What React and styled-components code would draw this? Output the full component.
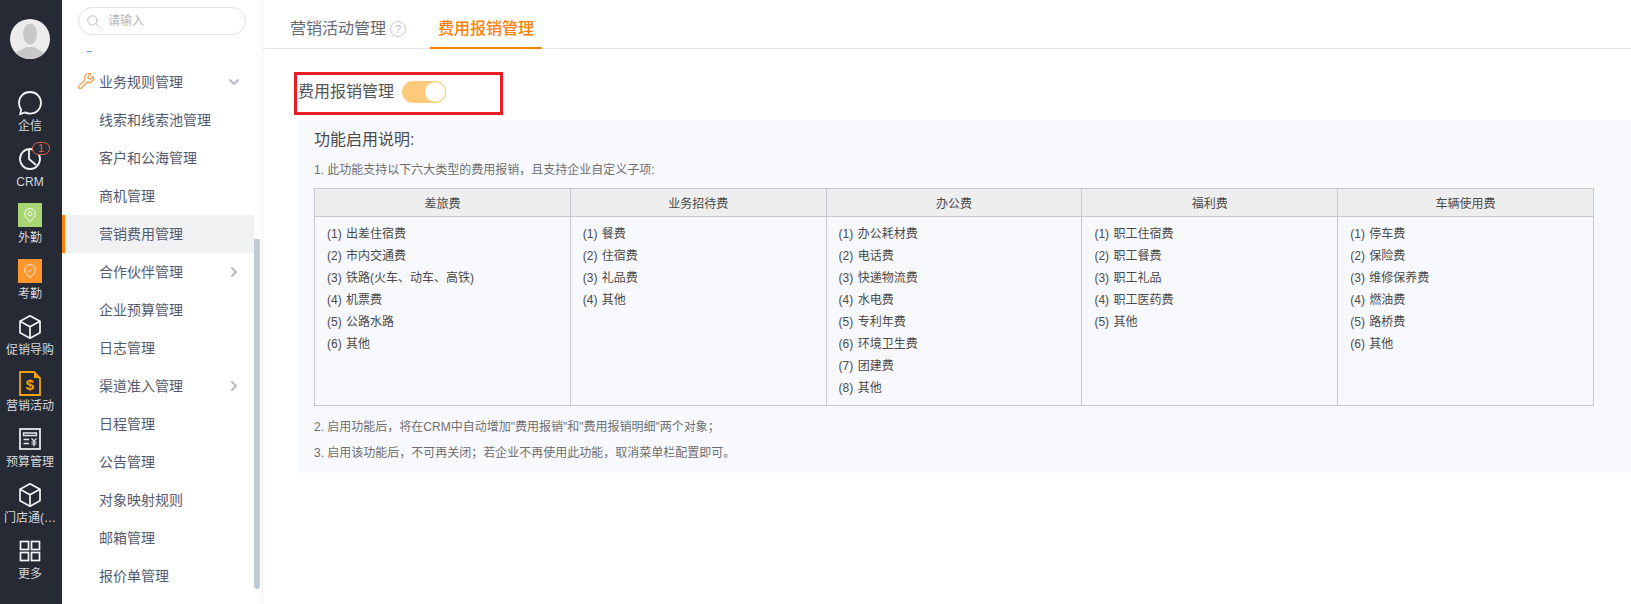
import styled, { createGlobalStyle } from "styled-components";
import { ChevronDown, ChevronRight, Search, Wrench } from "lucide-react";

const GlobalStyle = createGlobalStyle`
  html, body {
    margin: 0;
    padding: 0;
    background: #fff;
    font-family: "Liberation Sans", "Noto Sans CJK SC", sans-serif;
  }
`;

const Shell = styled.div`
  height: 100vh;
  display: flex;
  overflow: hidden;
  background: #fff;
`;

const Rail = styled.nav`
  width: 62px;
  flex: none;
  background: #252a35;
  display: flex;
  flex-direction: column;
  align-items: flex-start;
  padding: 19px 0 0 10px;
  box-sizing: border-box;
`;

const Avatar = styled.div`
  width: 40px;
  height: 40px;
  border-radius: 50%;
  overflow: hidden;
  margin-bottom: 31px;
  background: #ececec;

  svg {
    display: block;
  }
`;

const RailItem = styled.div`
  width: 60px;
  height: 56px;
  margin-left: -10px;
  flex: none;
  display: flex;
  flex-direction: column;
  align-items: center;
`;

const IconBox = styled.div`
  height: 26px;
  width: 60px;
  position: relative;
  display: flex;
  align-items: center;
  justify-content: center;
`;

const Tile = styled.div`
  width: 24px;
  height: 24px;
  background: ${({ $color }) => $color};
  display: flex;
  align-items: center;
  justify-content: center;
`;

const Badge = styled.span`
  position: absolute;
  left: 32px;
  top: -4px;
  width: 16px;
  height: 11px;
  border: 1px solid #ea6044;
  border-radius: 7px;
  background: #252a35;
  color: #ea6044;
  font-size: 11px;
  line-height: 11px;
  text-align: center;
`;

const RailLabel = styled.span`
  font-size: 12px;
  line-height: 20px;
  color: #d6d8dd;
  white-space: nowrap;
`;

const Sidebar = styled.aside`
  width: 201px;
  flex: none;
  box-sizing: border-box;
  border-right: 1px solid #f0f0f4;
  display: flex;
  flex-direction: column;
  overflow: hidden;
`;

const SearchWrap = styled.div`
  height: 48px;
  flex: none;
  box-sizing: border-box;
  padding: 7px 0 0 16px;
`;

const SearchBox = styled.div`
  width: 168px;
  height: 28px;
  box-sizing: border-box;
  border: 1px solid #dfe1ea;
  border-radius: 14px;
  display: flex;
  align-items: center;
  padding-left: 7px;
  gap: 8px;
  color: #b4b6bd;
  font-size: 12px;
  line-height: 16px;

  span {
    margin-top: -1px;
  }
`;

const MenuArea = styled.div`
  flex: 1;
  display: flex;
  min-height: 0;
`;

const MenuList = styled.ul`
  width: 192px;
  flex: none;
  list-style: none;
  margin: 0;
  padding: 0;
`;

const ClippedRow = styled.li`
  height: 15px;
  box-sizing: border-box;
  padding: 3px 0 0 25px;

  &::before {
    content: "";
    display: block;
    width: 5px;
    height: 1px;
    background: #4aa8f0;
  }
`;

const MenuRow = styled.li`
  height: 38px;
  box-sizing: border-box;
  display: flex;
  align-items: center;
  padding-left: ${({ $active, $group }) => ($group ? 15 : $active ? 34 : 37)}px;
  padding-right: 12px;
  padding-bottom: 3px;
  border-left: ${({ $active }) => ($active ? "3px solid #ff8000" : "none")};
  background: ${({ $active }) => ($active ? "#f0f1f3" : "transparent")};
  color: #545a6e;
  font-size: 14px;
  white-space: nowrap;

  .lead {
    color: #f5903a;
    margin-right: 4px;
    margin-top: 1px;
    flex: none;
  }

  .trail {
    color: #b6bac5;
    margin-left: auto;
    margin-top: 2px;
    flex: none;
  }
`;

const ScrollThumb = styled.div`
  width: 6px;
  height: 350px;
  margin-top: 191px;
  background: #c3cad5;
  border-radius: 0 0 3px 3px;
  flex: none;
`;

const Main = styled.main`
  flex: 1;
  min-width: 0;
  display: flex;
  flex-direction: column;
`;

const TabBar = styled.div`
  height: 49px;
  flex: none;
  box-sizing: border-box;
  border-bottom: 1px solid #e4e6ef;
  display: flex;
  gap: 16px;
  padding-left: 19px;
`;

const Tab = styled.div`
  height: 49px;
  box-sizing: border-box;
  padding: 17px 8px 0;
  display: flex;
  align-items: flex-start;
  gap: 4px;
  font-size: 16px;
  line-height: 24px;
  color: ${({ $active }) => ($active ? "#ff8000" : "#666a72")};
  font-weight: ${({ $active }) => ($active ? 500 : 400)};
  border-bottom: ${({ $active }) =>
    $active ? "2px solid #ff8000" : "2px solid transparent"};
`;

const Help = styled.span`
  width: 14px;
  height: 14px;
  margin-top: 4px;
  border: 1px solid #c8cacf;
  border-radius: 50%;
  color: #b8bbc1;
  font-size: 11px;
  line-height: 14px;
  text-align: center;
`;

const Content = styled.div`
  padding: 23px 0 0 31px;
`;

const Highlight = styled.div`
  width: 209px;
  height: 43px;
  box-sizing: border-box;
  border: 3px solid #ec1c24;
  display: flex;
  align-items: center;
  padding: 0 0 3px 1px;
  gap: 8px;
  font-size: 16px;
  line-height: 24px;
  color: #555;
`;

const Toggle = styled.span`
  width: 44px;
  height: 22px;
  border-radius: 11px;
  background: #fdc97a;
  display: flex;
  justify-content: flex-end;
  align-items: center;
  padding-right: 1px;
  box-sizing: border-box;

  &::after {
    content: "";
    width: 20px;
    height: 20px;
    border-radius: 50%;
    background: #fff;
  }
`;

const Panel = styled.section`
  margin: 5px 0 0 4px;
  height: 353px;
  box-sizing: border-box;
  padding: 8px 0 0 16px;
  background: #f8f9fd;
  color: #666;
  font-size: 12px;
`;

const Heading = styled.h3`
  margin: 0 0 9px;
  font-size: 16px;
  font-weight: 400;
  line-height: 24px;
  color: #4a4a4a;
`;

const Note = styled.p`
  margin: 0;
  line-height: 18px;
  color: #6f6f6f;

  & + & {
    margin-top: 8px;
  }
`;

const Table = styled.table`
  width: 1280px;
  height: 218px;
  margin: 9px 0 12px;
  border-collapse: collapse;
  table-layout: fixed;
  font-size: 12px;
  color: #4a4a4a;

  th,
  td {
    border: 1px solid #c5c8d2;
  }

  th {
    height: 27px;
    padding: 0;
    background: #eeeeee;
    font-weight: 400;
  }

  td {
    vertical-align: top;
    padding: 6px 12px 4px;
  }
`;

const Entry = styled.div`
  line-height: 22px;
  white-space: nowrap;
  word-spacing: 1px;
`;

const menu = [
  { label: "线索和线索池管理" },
  { label: "客户和公海管理" },
  { label: "商机管理" },
  { label: "营销费用管理", active: true },
  { label: "合作伙伴管理", more: true },
  { label: "企业预算管理" },
  { label: "日志管理" },
  { label: "渠道准入管理", more: true },
  { label: "日程管理" },
  { label: "公告管理" },
  { label: "对象映射规则" },
  { label: "邮箱管理" },
  { label: "报价单管理" },
];

const columns = [
  {
    title: "差旅费",
    items: ["出差住宿费", "市内交通费", "铁路(火车、动车、高铁)", "机票费", "公路水路", "其他"],
  },
  { title: "业务招待费", items: ["餐费", "住宿费", "礼品费", "其他"] },
  {
    title: "办公费",
    items: ["办公耗材费", "电话费", "快递物流费", "水电费", "专利年费", "环境卫生费", "团建费", "其他"],
  },
  { title: "福利费", items: ["职工住宿费", "职工餐费", "职工礼品", "职工医药费", "其他"] },
  {
    title: "车辆使用费",
    items: ["停车费", "保险费", "维修保养费", "燃油费", "路桥费", "其他"],
  },
];

const BubbleIcon = () => (
  <svg width="26" height="26" viewBox="0 0 26 26" fill="none" stroke="#f2f3f5" strokeWidth="1.8">
    <path d="M13 2c6.200 0 11 4.600 11 10.800S19.200 23.600 13 23.600c-1.900 0-3.700-.4-5.200-1.200L3.200 24l1-4.300C2.800 17.900 2 15.500 2 12.800 2 6.600 6.800 2 13 2z" />
  </svg>
);

const PieIcon = () => (
  <svg width="24" height="24" viewBox="0 0 24 24" fill="none" stroke="#f2f3f5" strokeWidth="1.8">
    <circle cx="12" cy="12" r="10" />
    <path d="M11 2.500V12l7 6" />
  </svg>
);

const PinIcon = ({ check }) => (
  <svg width="16" height="16" viewBox="0 0 16 16" fill="none" stroke="#fff" strokeWidth="1" opacity="0.9">
    <path d="M8 14.500C5 12 2.800 9.600 2.800 6.800a5.200 5.200 0 0 1 10.400 0c0 2.800-2.200 5.200-5.200 7.700z" />
    {check ? <path d="M5.600 7l1.800 1.800 3-3" /> : <circle cx="8" cy="6.800" r="2" />}
  </svg>
);

const BoxIcon = () => (
  <svg width="24" height="26" viewBox="0 0 24 26" fill="none" stroke="#f2f3f5" strokeWidth="1.7" strokeLinejoin="round">
    <path d="M12 1.800l10 5.400v11.600l-10 5.400-10-5.400V7.200z" />
    <path d="M2 7.200l10 5.600 10-5.600M12 12.800v11.400" />
  </svg>
);

const DollarIcon = () => (
  <svg width="22" height="25" viewBox="0 0 22 25" fill="none">
    <path d="M1 1h14l6 6v17H1z" stroke="#f0a30a" strokeWidth="1.800" />
    <path d="M15 1v6h6z" fill="#f0a30a" />
    <text x="11" y="19" textAnchor="middle" fontSize="15" fontWeight="700" fill="#f0a30a" fontFamily="Liberation Sans">$</text>
  </svg>
);

const BudgetIcon = () => (
  <svg width="22" height="22" viewBox="0 0 22 22" fill="none" stroke="#e6e7ea">
    <rect x="1" y="1" width="20" height="20" strokeWidth="1.800" />
    <path d="M4.500 5h13v2.500h-13zM4.500 11.500H10M4.500 15.500H10" strokeWidth="1.300" />
    <path d="M12.500 10.500l2.500 2.500 2.500-2.500M15 13v5.500M12.500 14h5M12.500 16h5" strokeWidth="1.200" />
  </svg>
);

const GridIcon = () => (
  <svg width="22" height="22" viewBox="0 0 22 22" fill="none" stroke="#f2f3f5" strokeWidth="1.700">
    <rect x="1.500" y="1.500" width="8" height="8" />
    <rect x="12.500" y="1.500" width="8" height="8" />
    <rect x="1.500" y="12.500" width="8" height="8" />
    <rect x="12.500" y="12.500" width="8" height="8" />
  </svg>
);

const railItems = [
  { label: "企信", icon: <BubbleIcon /> },
  { label: "CRM", icon: <PieIcon />, badge: "1" },
  { label: "外勤", icon: <Tile $color="#a8d672"><PinIcon /></Tile> },
  { label: "考勤", icon: <Tile $color="#ff952b"><PinIcon check /></Tile> },
  { label: "促销导购", icon: <BoxIcon /> },
  { label: "营销活动", icon: <DollarIcon /> },
  { label: "预算管理", icon: <BudgetIcon /> },
  { label: "门店通(…", icon: <BoxIcon /> },
  { label: "更多", icon: <GridIcon /> },
];

export default function App() {
  return (
    <Shell>
      <GlobalStyle />
      <Rail>
        <Avatar>
          <svg width="40" height="40" viewBox="0 0 40 40">
            <ellipse cx="20" cy="15" rx="7" ry="10.500" fill="#c8c8c8" />
            <path d="M2 40c1-7 10-9 14-12h8c4 3 13 5 14 12z" fill="#c8c8c8" />
          </svg>
        </Avatar>
        {railItems.map((item) => (
          <RailItem key={item.label}>
            <IconBox>
              {item.icon}
              {item.badge && <Badge>{item.badge}</Badge>}
            </IconBox>
            <RailLabel>{item.label}</RailLabel>
          </RailItem>
        ))}
      </Rail>

      <Sidebar>
        <SearchWrap>
          <SearchBox>
            <Search size={14} strokeWidth={1.4} />
            <span>请输入</span>
          </SearchBox>
        </SearchWrap>
        <MenuArea>
          <MenuList>
            <ClippedRow />
            <MenuRow $group>
              <Wrench className="lead" size={18} strokeWidth={1.5} />
              业务规则管理
              <ChevronDown className="trail" size={16} strokeWidth={3} />
            </MenuRow>
            {menu.map((row) => (
              <MenuRow key={row.label} $active={row.active}>
                {row.label}
                {row.more && <ChevronRight className="trail" size={16} strokeWidth={3} />}
              </MenuRow>
            ))}
          </MenuList>
          <ScrollThumb />
        </MenuArea>
      </Sidebar>

      <Main>
        <TabBar>
          <Tab>
            营销活动管理
            <Help>?</Help>
          </Tab>
          <Tab $active>费用报销管理</Tab>
        </TabBar>
        <Content>
          <Highlight>
            费用报销管理
            <Toggle />
          </Highlight>
          <Panel>
            <Heading>功能启用说明:</Heading>
            <Note>1. 此功能支持以下六大类型的费用报销，且支持企业自定义子项:</Note>
            <Table>
              <thead>
                <tr>
                  {columns.map((col) => (
                    <th key={col.title}>{col.title}</th>
                  ))}
                </tr>
              </thead>
              <tbody>
                <tr>
                  {columns.map((col) => (
                    <td key={col.title}>
                      {col.items.map((text, i) => (
                        <Entry key={text}>
                          ({i + 1}) {text}
                        </Entry>
                      ))}
                    </td>
                  ))}
                </tr>
              </tbody>
            </Table>
            <Note>2. 启用功能后，将在CRM中自动增加"费用报销"和"费用报销明细"两个对象；</Note>
            <Note>3. 启用该功能后，不可再关闭；若企业不再使用此功能，取消菜单栏配置即可。</Note>
          </Panel>
        </Content>
      </Main>
    </Shell>
  );
}
